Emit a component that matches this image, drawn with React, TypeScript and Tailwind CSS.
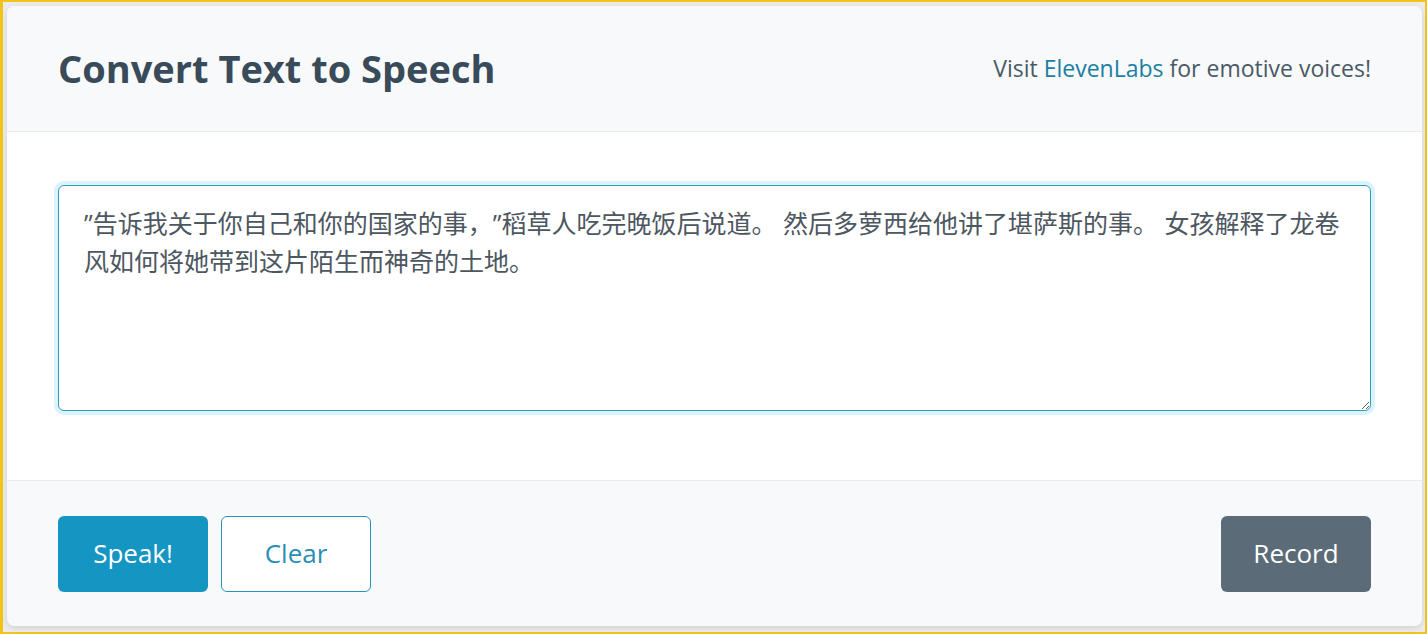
import { useState } from 'react'

const initialText =
  '”告诉我关于你自己和你的国家的事，”稻草人吃完晚饭后说道。 然后多萝西给他讲了堪萨斯的事。 女孩解释了龙卷风如何将她带到这片陌生而神奇的土地。'

export default function App() {
  const [text, setText] = useState(initialText)

  return (
    <div className="h-[634px] w-full border-2 border-l-[3px] border-[#f2c318] bg-[#ececec] pl-1 pr-[3px] pt-1 pb-[6px] font-['Open_Sans','Noto_Sans_CJK_SC',sans-serif]">
      <div className="flex h-full flex-col overflow-hidden rounded-lg bg-white shadow-[0_2px_6px_rgba(0,0,0,0.12)]">
        {/* Header */}
        <div className="flex h-[126px] items-center justify-between border-b border-[#e9ecef] bg-[#f8f9fa] px-[51px]">
          <h1 className="text-[38px] font-bold text-[#394b59]">Convert Text to Speech</h1>
          <p className="text-[23px] text-[#495965]">
            Visit <a href="#" className="text-[#1a7fa3]">ElevenLabs</a> for emotive voices!
          </p>
        </div>

        {/* Body */}
        <div className="flex-1 px-[51px] pt-[53px]">
          <textarea
            lang="zh-CN"
            value={text}
            onChange={(e) => setText(e.target.value)}
            className="block h-[226px] w-full rounded-md border border-[#2e9fb8] bg-white pl-[25px] pr-[12px] pt-[18px] text-[25px] leading-[38.4px] text-[#4d575f] shadow-[0_0_0_4px_rgba(150,220,245,0.35)] outline-none [text-spacing-trim:space-all]"
          />
        </div>

        {/* Footer */}
        <div className="flex h-[146px] items-center justify-between border-t border-[#e9ecef] bg-[#f8f9fa] px-[51px]">
          <div className="flex gap-[13px]">
            <button className="h-[76px] w-[150px] rounded-md bg-[#1495c2] text-[26px] text-white">Speak!</button>
            <button className="h-[76px] w-[150px] rounded-md border border-[#2a93b8] bg-white text-[26px] text-[#2a8fb6]">
              Clear
            </button>
          </div>
          <button className="h-[76px] w-[150px] rounded-md bg-[#5b6b77] text-[26px] text-white">Record</button>
        </div>
      </div>
    </div>
  )
}
